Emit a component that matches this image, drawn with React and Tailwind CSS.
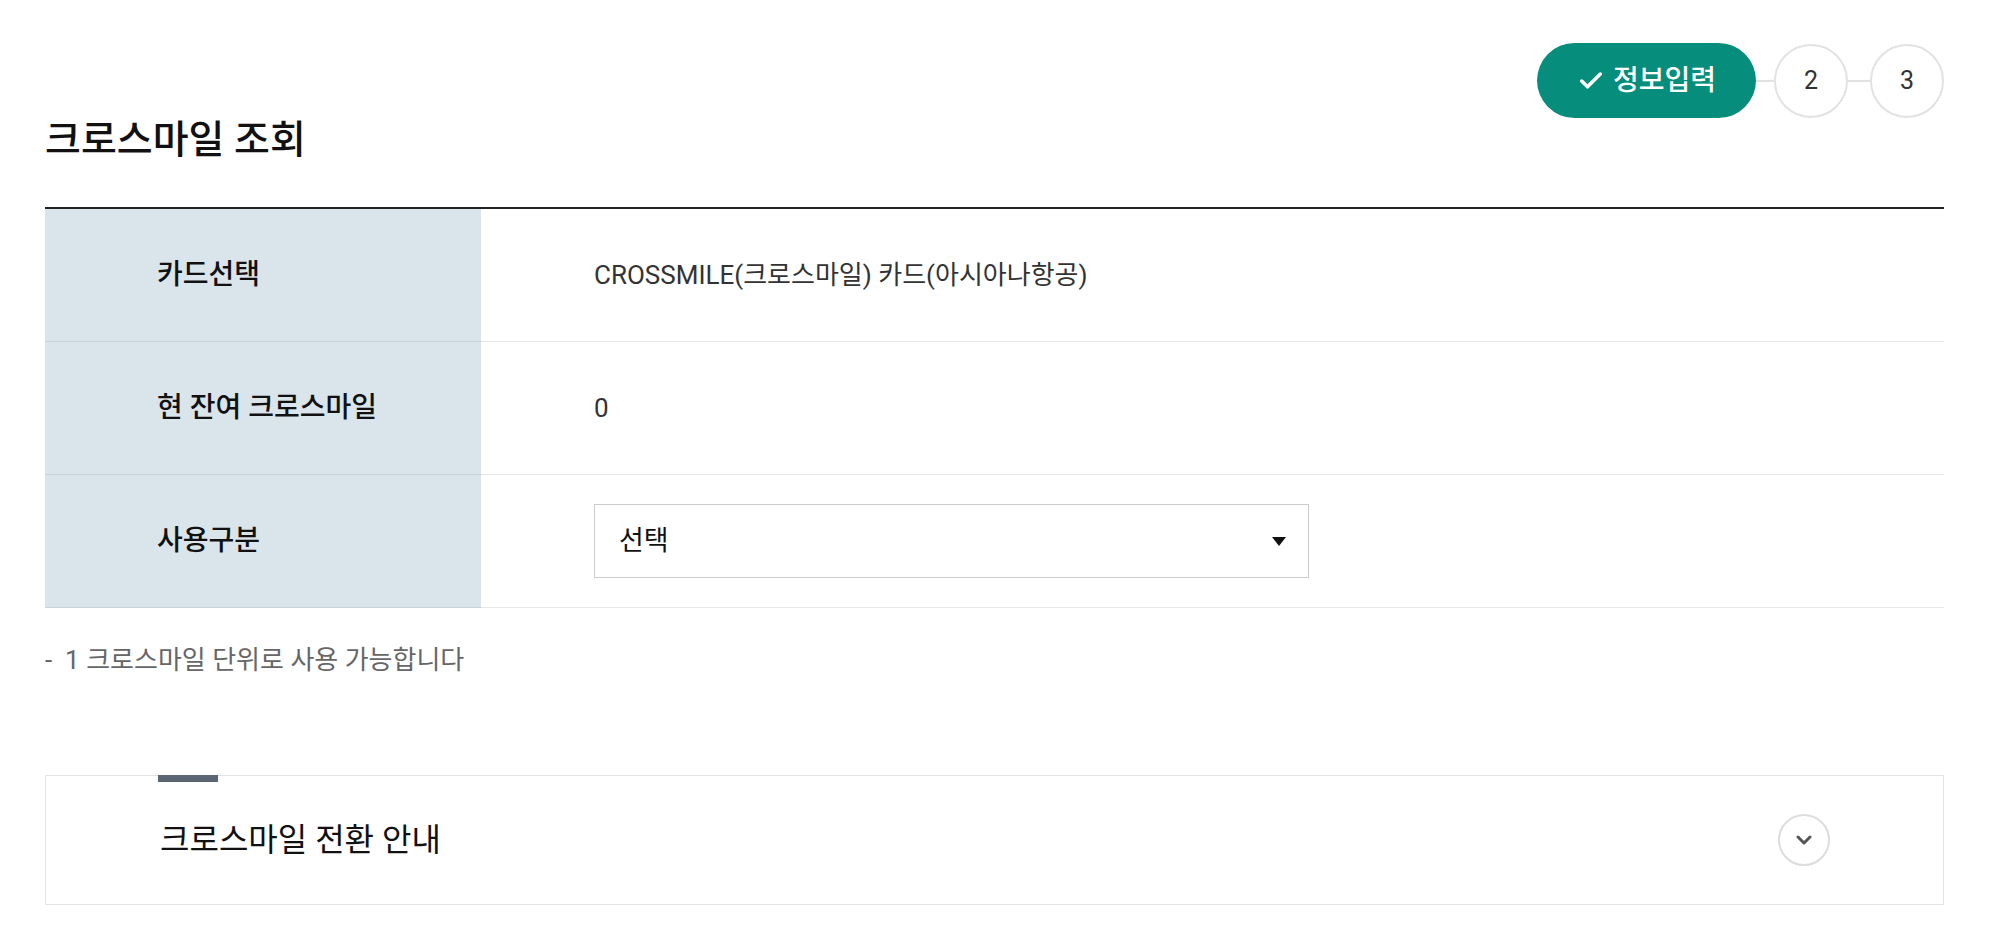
import React, { useState } from 'react';
import { Check, ChevronDown } from 'lucide-react';

const font = { fontFamily: 'Roboto, "Noto Sans CJK KR", sans-serif' };

const rows = [
  { label: '카드선택', value: 'CROSSMILE(크로스마일) 카드(아시아나항공)' },
  { label: '현 잔여 크로스마일', value: '0' },
  { label: '사용구분', select: true },
];

const Steps = () => (
  <div className="flex items-center">
    <div className="flex h-[75px] w-[219px] items-center justify-center gap-[8px] rounded-full bg-[#078d7b] text-[28px] font-medium text-white">
      <Check className="h-[28px] w-[28px]" strokeWidth={3} />
      <span>정보입력</span>
    </div>
    <div className="h-[2px] w-[18px] bg-[#e2e2e2]" />
    <div className="flex h-[74px] w-[74px] items-center justify-center rounded-full border-2 border-[#e2e2e2] text-[25px] text-[#333]">2</div>
    <div className="h-[2px] w-[22px] bg-[#e2e2e2]" />
    <div className="flex h-[74px] w-[74px] items-center justify-center rounded-full border-2 border-[#e2e2e2] text-[25px] text-[#333]">3</div>
  </div>
);

export default function App() {
  const [open, setOpen] = useState(false);

  return (
    <div className="min-h-screen bg-white" style={font}>
      <div className="ml-[45px] w-[1899px] pt-[43px]">
        <div className="flex justify-end">
          <Steps />
        </div>
        <h1 className="h-[44px] text-[39px] font-medium leading-[44px] text-[#111]">크로스마일 조회</h1>

        <div className="mt-[45px] border-t-2 border-[#222]">
          {rows.map((r) => (
            <div key={r.label} className="grid grid-cols-[436px_1fr]">
              <div className="flex h-[133px] items-center border-b border-[#c6d3dc] bg-[#dae4eb] pl-[112px] text-[28px] font-medium text-[#111]">
                {r.label}
              </div>
              <div className="flex h-[133px] items-center border-b border-[#e6e6e6] pl-[113px] text-[26px] text-[#333]">
                {r.select ? (
                  <div className="flex h-[74px] w-[715px] items-center justify-between border border-[#cccccc] pl-[24px] pr-[22px] text-[27px] text-[#111]">
                    <span>선택</span>
                    <svg width="14" height="9" viewBox="0 0 14 9">
                      <path d="M0 0 L14 0 L7 9 Z" fill="#111" />
                    </svg>
                  </div>
                ) : (
                  r.value
                )}
              </div>
            </div>
          ))}
        </div>

        <p className="mt-[34px] text-[26px] leading-[36px] text-[#666]">-&nbsp;&nbsp;1 크로스마일 단위로 사용 가능합니다</p>

        <div className="relative mt-[97px] border border-[#e3e3e3]">
          <div className="absolute left-[112px] top-[-1px] h-[7px] w-[60px] bg-[#5a6672]" />
          <button
            onClick={() => setOpen(!open)}
            className="flex h-[128px] w-full items-center justify-between pl-[114px] pr-[113px] text-left"
          >
            <span className="text-[32px] text-[#111]">크로스마일 전환 안내</span>
            <span className="flex h-[52px] w-[52px] items-center justify-center rounded-full border-2 border-[#dddddd]">
              <ChevronDown className={`h-[24px] w-[24px] text-[#555] ${open ? 'rotate-180' : ''}`} strokeWidth={3} />
            </span>
          </button>
        </div>
      </div>
    </div>
  );
}
